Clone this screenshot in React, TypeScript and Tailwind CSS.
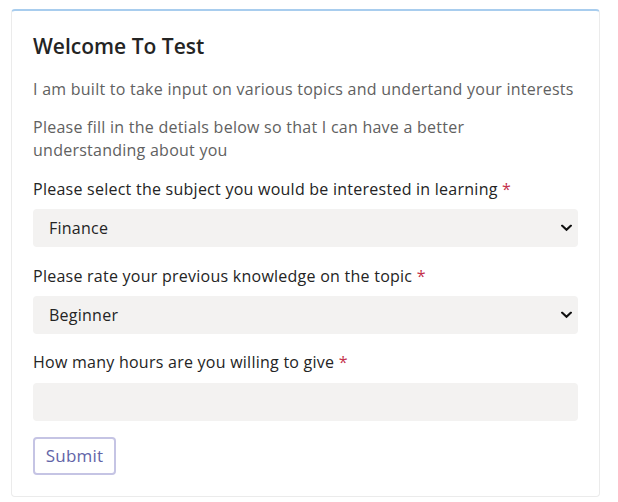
import React from "react";

function Chevron() {
  return (
    <svg width="11" height="7" viewBox="0 0 11 7" className="pointer-events-none absolute right-[6px] top-1/2 -translate-y-1/2">
      <path d="M1.2 1.2 L5.5 5.3 L9.8 1.2" fill="none" stroke="#111" strokeWidth="2.2" strokeLinecap="square" />
    </svg>
  );
}

function Label({ text }: { text: string }) {
  return (
    <div className="text-[16px] leading-[23px] tracking-[0.25px] text-[#242424]">
      {text} <span className="text-[#c4314b]">*</span>
    </div>
  );
}

function Select({ value }: { value: string }) {
  return (
    <div className="relative mt-[8px] h-[38px]">
      <select
        defaultValue={value}
        className="h-[38px] w-full appearance-none rounded-[4px] bg-[#f3f2f1] pl-[16px] text-[16px] tracking-[0.25px] text-[#242424] outline-none"
        style={{ fontFamily: '"Open Sans", sans-serif' }}
      >
        <option>{value}</option>
      </select>
      <Chevron />
    </div>
  );
}

export default function App() {
  return (
    <div className="min-h-[502px] bg-white pl-[11px] pt-[9px]" style={{ fontFamily: '"Open Sans", "Noto Sans", sans-serif' }}>
      <div className="w-[589px] h-[488px] rounded-[4px] border border-t-2 border-[#ebebeb] border-t-[#a8cdee] px-[21px] pt-[21px]">
        <h1 className="text-[21px] font-semibold leading-[28px] text-[#242424]">Welcome To Test</h1>
        <p className="mt-[18px] text-[16px] leading-[23px] tracking-[0.25px] text-[#616161]">
          I am built to take input on various topics and undertand your interests
        </p>
        <p className="mt-[15px] text-[16px] leading-[23px] tracking-[0.25px] text-[#616161]">
          Please fill in the detials below so that I can have a better understanding about you
        </p>
        <div className="mt-[16px]">
          <Label text="Please select the subject you would be interested in learning" />
          <Select value="Finance" />
        </div>
        <div className="mt-[18px]">
          <Label text="Please rate your previous knowledge on the topic" />
          <Select value="Beginner" />
        </div>
        <div className="mt-[17px]">
          <Label text="How many hours are you willing to give" />
          <input className="mt-[9px] h-[38px] w-full rounded-[4px] bg-[#f3f2f1] px-[16px] outline-none" />
        </div>
        <button className="mt-[16px] h-[38px] w-[83px] rounded-[4px] border-2 border-[#c5c4e4] bg-white text-[17px] tracking-[0.2px] text-[#6264a7]">
          Submit
        </button>
      </div>
    </div>
  );
}
